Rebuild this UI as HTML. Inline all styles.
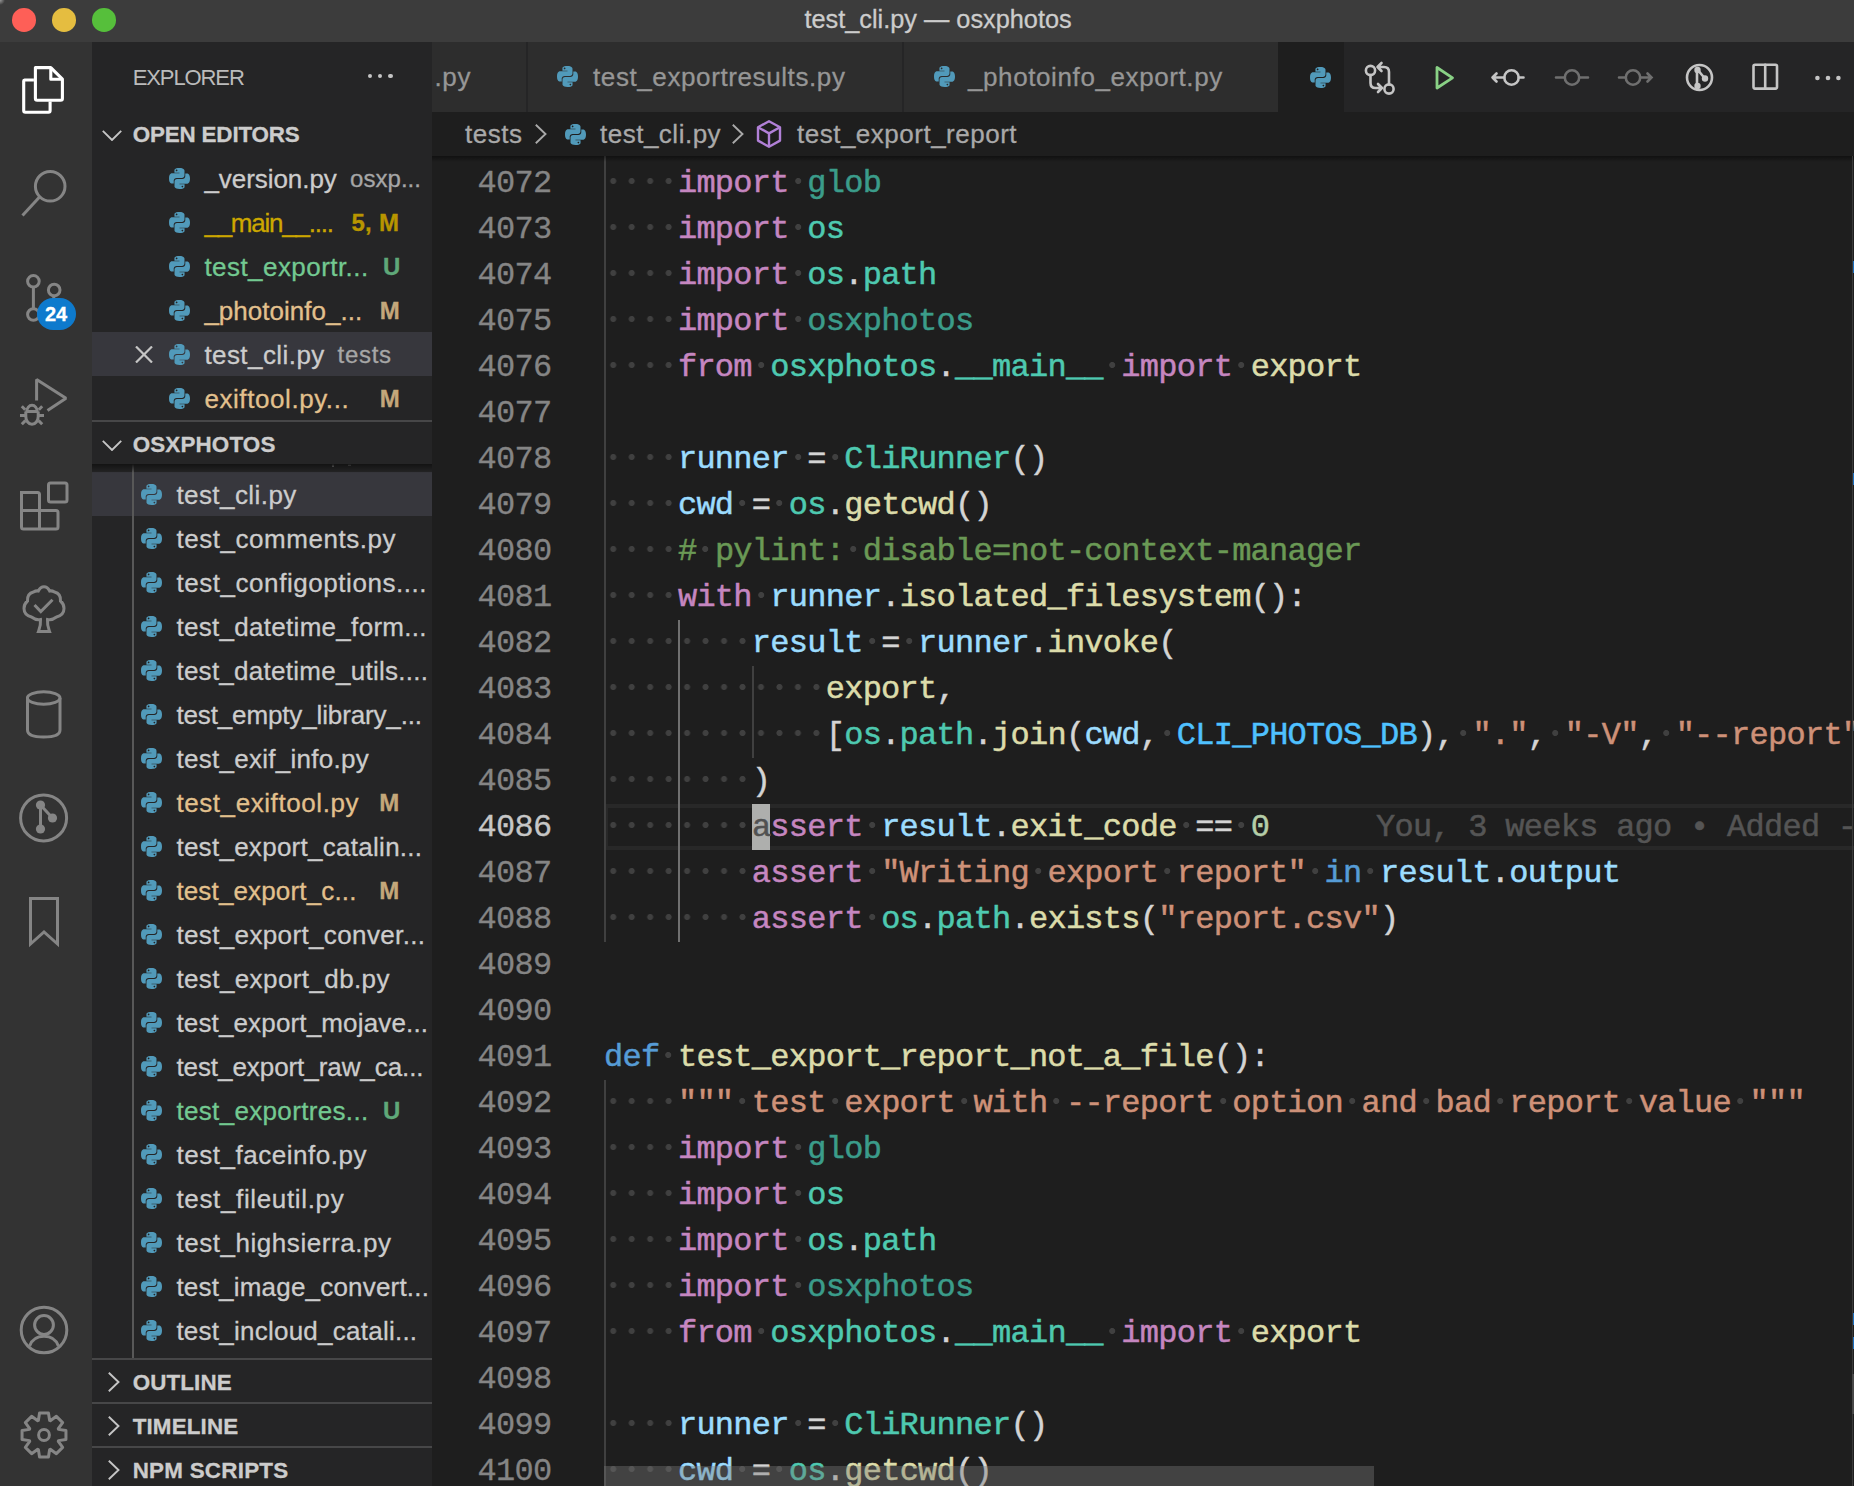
<!DOCTYPE html><html><head><meta charset="utf-8"><style>
*{margin:0;padding:0;box-sizing:border-box}
html,body{width:1854px;height:1486px;overflow:hidden;background:#1e1e1e}
body{position:relative;font-family:"Liberation Sans",sans-serif;-webkit-text-stroke:0.3px currentColor}
.t22{position:absolute;font-size:21.2px;line-height:28px;white-space:pre}
.hdr{position:absolute;font-size:22.4px;font-weight:bold;color:#cccccc;line-height:28px;white-space:pre}
.it{position:absolute;font-size:26px;line-height:44px;height:44px;white-space:pre;letter-spacing:0.35px}
.badge{font-size:24px;font-weight:bold;letter-spacing:0}
.tt{position:absolute;font-size:26px;line-height:70px;color:#969696;white-space:pre;letter-spacing:0.6px}
.dot{position:absolute;width:4.4px;height:4.4px;border-radius:50%;background:#c5c5c5}
.ln{position:absolute;left:380px;width:171.5px;height:46px;margin-top:1.3px;text-align:right;font-family:"Liberation Mono",monospace;font-size:32px;letter-spacing:-0.73px;line-height:46px;color:#858585;white-space:pre}
.ln.act{color:#c6c6c6}
.cl{position:absolute;left:604px;height:46px;margin-top:1.3px;-webkit-text-stroke:0.5px currentColor;font-family:"Liberation Mono",monospace;font-size:32px;letter-spacing:-0.73px;line-height:46px;white-space:pre;color:#d4d4d4}
.dt{position:absolute;height:8px;background:radial-gradient(circle at 9.235px 4px,#404040 2.6px,rgba(64,64,64,0) 3.4px) 0 0/18.47px 8px repeat-x}
.py{width:21px;height:21px}
</style></head><body>
<svg width="0" height="0" style="position:absolute"><defs><symbol id="pyi" viewBox="0 0 24 24"><path fill="#519aba" d="M11.9 0C5.8 0 6.2 2.6 6.2 2.6v2.7h5.8v.8H3.9S0 5.7 0 11.9c0 6.1 3.4 5.9 3.4 5.9h2v-2.9s-.1-3.4 3.3-3.4h5.8s3.2.1 3.2-3.1V3.2S18.2 0 11.9 0zM8.7 1.8c.6 0 1 .5 1 1s-.5 1-1 1c-.6 0-1-.5-1-1s.4-1 1-1zM12.1 24c6.1 0 5.7-2.6 5.7-2.6v-2.7H12v-.8h8.1s3.9.4 3.9-5.7c0-6.1-3.4-5.9-3.4-5.9h-2v2.9s.1 3.4-3.3 3.4H9.5s-3.2-.1-3.2 3.1v5.2S5.8 24 12.1 24zm3.2-1.8c-.6 0-1-.5-1-1s.5-1 1-1c.6 0 1 .5 1 1s-.4 1-1 1z"/></symbol></defs></svg>
<div style="position:absolute;left:0;top:0;width:1854px;height:42px;background:#3c3c3c"></div>
<div style="position:absolute;left:0;top:0;width:6px;height:6px;background:radial-gradient(circle at 0 0,#9a9a9a 0,rgba(60,60,60,0) 5px)"></div>
<i style="position:absolute;left:11.7px;top:7.7px;width:24.6px;height:24.6px;border-radius:50%;background:#333b3b"></i>
<i style="position:absolute;left:12.2px;top:8.2px;width:23.6px;height:23.6px;border-radius:50%;background:#fe5f57"></i>
<i style="position:absolute;left:51.7px;top:7.7px;width:24.6px;height:24.6px;border-radius:50%;background:#333b3b"></i>
<i style="position:absolute;left:52.2px;top:8.2px;width:23.6px;height:23.6px;border-radius:50%;background:#e5bd40"></i>
<i style="position:absolute;left:91.7px;top:7.7px;width:24.6px;height:24.6px;border-radius:50%;background:#333b3b"></i>
<i style="position:absolute;left:92.2px;top:8.2px;width:23.6px;height:23.6px;border-radius:50%;background:#56bf3b"></i>
<div style="position:absolute;left:804.5px;top:-2px;height:42px;line-height:42px;font-size:25.3px;color:#cccccc;white-space:pre">test_cli.py — osxphotos</div>
<div style="position:absolute;left:0;top:42px;width:92px;height:1444px;background:#333333"></div>
<svg style="position:absolute;left:0;top:42px;width:92px;height:1444px" viewBox="0 42 92 1444">
<g fill="none" stroke="#ffffff" stroke-width="3.1" stroke-linejoin="round">
<path d="M33.9 80H24.5Q23.7 80 23.7 81V110.6Q23.7 112.3 25.4 112.3H48.5Q50.1 112.3 50.1 110.6V101.6"/>
<path d="M35.4 67.6H50.8L62.4 79.2V98.6Q62.4 100.3 60.7 100.3H37.1Q35.4 100.3 35.4 98.6Z"/>
<path d="M50.8 67.6V79.2H62.4"/>
</g>
<g fill="none" stroke="#858585" stroke-width="3">
<circle cx="50.2" cy="186.3" r="14.8"/>
<path d="M40 196.5L22.5 215.5"/>
<circle cx="33.4" cy="281.3" r="5.8"/>
<circle cx="54.2" cy="290" r="5.8"/>
<circle cx="33.4" cy="314.5" r="5.8"/>
<path d="M33.4 287.1V308.7"/>
<path d="M54.2 295.8Q54.2 303 41 308"/>
<path d="M36.6 400.5V379.5L66 398.3L47.5 410.5" stroke-linejoin="bevel"/>
<path d="M25.5 411.5H38.5M26.8 411.5A5.2 6.2 0 0 1 37.2 411.5M25.8 411.5V416.5A6.2 7.8 0 0 0 38.2 416.5V411.5"/>
<path d="M20 415.5H25.8M38.2 415.5H44M21.8 406.3L25.2 409.7M42.2 406.3L38.8 409.7M21.8 424.2L25.4 420.6M42.2 424.2L38.6 420.6"/>
<path d="M21.5 492.5H37.5Q39.5 492.5 39.5 494.5V510.5H56Q58 510.5 58 512.5V527Q58 529 56 529H23.5Q21.5 529 21.5 527Z"/>
<path d="M21.5 510.5H39.5V529"/>
<rect x="48.5" y="483" width="18.5" height="19" rx="2"/>
<path d="M34.5 605L40.8 611.5L52.5 599.8"/>
<path d="M40.5 619.5Q36 620.5 31.5 617Q24 615 24 608.5Q24 604 27.5 601Q27 593.5 33.5 592Q36 590.5 38.3 591Q40.5 586.8 44 586.8Q47.5 586.8 49.7 591Q52 590.5 54.5 592Q61 593.5 60.5 601Q64 604 64 608.5Q64 615 56.5 617Q52 620.5 47.5 619.5Q47 625 49.5 631.5H38.5Q41 625 40.5 619.5Z"/>
<path d="M27.5 698V730Q27.5 737 43.7 737Q60 737 60 730V698"/>
<ellipse cx="43.7" cy="698" rx="16.3" ry="6.2"/>
<circle cx="43.6" cy="817.9" r="23"/>
<path d="M40.5 805V829M40.5 805L52.5 818"/>
<path d="M30.5 898.5H57.5V944L44 932L30.5 944Z"/>
<circle cx="44" cy="1330" r="22.8"/>
<circle cx="44" cy="1325" r="9.4"/>
<path d="M29.6 1346Q33 1336.2 44 1336.2Q55 1336.2 58.4 1346"/>
<circle cx="44" cy="1435" r="5.4"/>
</g>
<g fill="#858585">
<circle cx="40.5" cy="805" r="4.6"/><circle cx="52.5" cy="818" r="4.6"/><circle cx="40.5" cy="829" r="4.6"/>
</g>
<path fill="none" stroke="#858585" stroke-width="3" stroke-linejoin="round" d="M39.55 1413.05 L48.45 1413.05 L49.64 1420.46 L50.30 1420.73 L56.38 1416.33 L62.67 1422.62 L58.27 1428.70 L58.54 1429.36 L65.95 1430.55 L65.95 1439.45 L58.54 1440.64 L58.27 1441.30 L62.67 1447.38 L56.38 1453.67 L50.30 1449.27 L49.64 1449.54 L48.45 1456.95 L39.55 1456.95 L38.36 1449.54 L37.70 1449.27 L31.62 1453.67 L25.33 1447.38 L29.73 1441.30 L29.46 1440.64 L22.05 1439.45 L22.05 1430.55 L29.46 1429.36 L29.73 1428.70 L25.33 1422.62 L31.62 1416.33 L37.70 1420.73 L38.36 1420.46Z"/>
</svg>
<div style="position:absolute;left:36.5px;top:298px;width:39px;height:32px;border-radius:16px;background:#0e7acd;color:#fff;font:bold 20px 'Liberation Sans',sans-serif;text-align:center;line-height:32px">24</div>
<div style="position:absolute;left:92px;top:42px;width:340px;height:1444px;background:#252526"></div>
<div style="position:absolute;left:132.7px;top:64px;font-size:22px;font-weight:400;color:#bbbbbb;line-height:28px;height:28px;white-space:pre;letter-spacing:-1.104px;-webkit-text-stroke:0">EXPLORER</div>
<i class="dot" style="left:367.8px;top:73.8px"></i>
<i class="dot" style="left:378.1px;top:73.8px"></i>
<i class="dot" style="left:388.3px;top:73.8px"></i>
<svg style="position:absolute;left:102px;top:130px;width:20px;height:11px" viewBox="0 0 20 11"><path d="M0.8 0.8L10 10L19.2 0.8" stroke="#c5c5c5" stroke-width="1.9" fill="none"/></svg>
<div style="position:absolute;left:132.7px;top:121px;font-size:22.4px;font-weight:700;color:#cccccc;line-height:28px;height:28px;white-space:pre;letter-spacing:-0.154px;">OPEN EDITORS</div>
<svg style="position:absolute;left:169px;top:168px;width:21px;height:21px" viewBox="0 0 24 24"><use href="#pyi"/></svg>
<div style="position:absolute;left:204.4px;top:157px;font-size:26px;font-weight:400;color:#cccccc;line-height:44px;height:44px;white-space:pre;letter-spacing:-0.057px;">_version.py</div>
<div style="position:absolute;left:350.1px;top:157px;font-size:24px;font-weight:400;color:#a6a6a6;line-height:44px;height:44px;white-space:pre;letter-spacing:0.033px;">osxp...</div>
<svg style="position:absolute;left:169px;top:212px;width:21px;height:21px" viewBox="0 0 24 24"><use href="#pyi"/></svg>
<div style="position:absolute;left:204.4px;top:201px;font-size:26px;font-weight:400;color:#cca700;line-height:44px;height:44px;white-space:pre;letter-spacing:-1.218px;">__main__....</div>
<div style="position:absolute;left:351.5px;top:201px;font-size:24px;font-weight:700;color:#b89500;line-height:44px;height:44px;white-space:pre;letter-spacing:0.271px;">5, M</div>
<svg style="position:absolute;left:169px;top:256px;width:21px;height:21px" viewBox="0 0 24 24"><use href="#pyi"/></svg>
<div style="position:absolute;left:204.4px;top:245px;font-size:26px;font-weight:400;color:#73c991;line-height:44px;height:44px;white-space:pre;letter-spacing:0.448px;">test_exportr...</div>
<div style="position:absolute;left:383px;top:245px;font-size:24px;font-weight:700;color:#5fa879;line-height:44px;height:44px;white-space:pre;letter-spacing:0.000px;">U</div>
<svg style="position:absolute;left:169px;top:300px;width:21px;height:21px" viewBox="0 0 24 24"><use href="#pyi"/></svg>
<div style="position:absolute;left:204.4px;top:289px;font-size:26px;font-weight:400;color:#e2c08d;line-height:44px;height:44px;white-space:pre;letter-spacing:0.017px;">_photoinfo_...</div>
<div style="position:absolute;left:379.7px;top:289px;font-size:24px;font-weight:700;color:#c4a77a;line-height:44px;height:44px;white-space:pre;letter-spacing:0.000px;">M</div>
<div style="position:absolute;left:92px;top:332px;width:340px;height:44px;background:#37373d"></div>
<svg style="position:absolute;left:135px;top:345.5px;width:18px;height:17px" viewBox="0 0 18 17"><path d="M1 0.5L17 16.5M17 0.5L1 16.5" stroke="#c5c5c5" stroke-width="2.2" fill="none"/></svg>
<svg style="position:absolute;left:169px;top:344px;width:21px;height:21px" viewBox="0 0 24 24"><use href="#pyi"/></svg>
<div style="position:absolute;left:204.4px;top:333px;font-size:26px;font-weight:400;color:#cccccc;line-height:44px;height:44px;white-space:pre;letter-spacing:0.429px;">test_cli.py</div>
<div style="position:absolute;left:337.6px;top:333px;font-size:24px;font-weight:400;color:#a6a6a6;line-height:44px;height:44px;white-space:pre;letter-spacing:0.678px;">tests</div>
<svg style="position:absolute;left:169px;top:388px;width:21px;height:21px" viewBox="0 0 24 24"><use href="#pyi"/></svg>
<div style="position:absolute;left:204.4px;top:377px;font-size:26px;font-weight:400;color:#e2c08d;line-height:44px;height:44px;white-space:pre;letter-spacing:0.576px;">exiftool.py...</div>
<div style="position:absolute;left:379.7px;top:377px;font-size:24px;font-weight:700;color:#c4a77a;line-height:44px;height:44px;white-space:pre;letter-spacing:0.000px;">M</div>
<div style="position:absolute;left:92px;top:420px;width:340px;height:2px;background:#474748"></div>
<svg style="position:absolute;left:102px;top:440px;width:20px;height:11px" viewBox="0 0 20 11"><path d="M0.8 0.8L10 10L19.2 0.8" stroke="#c5c5c5" stroke-width="1.9" fill="none"/></svg>
<div style="position:absolute;left:132.7px;top:431px;font-size:22.4px;font-weight:700;color:#cccccc;line-height:28px;height:28px;white-space:pre;letter-spacing:0.158px;">OSXPHOTOS</div>
<div style="position:absolute;left:92px;top:464px;width:340px;height:894px;overflow:hidden">
<div style="position:absolute;left:-92px;top:-464px;width:432px;height:1358px">
<i style="position:absolute;left:331.5px;top:464px;width:2px;height:2.5px;background:#bbbbbb"></i><i style="position:absolute;left:347.5px;top:464px;width:3px;height:2px;background:#bbbbbb"></i>
<div style="position:absolute;left:92px;top:472px;width:340px;height:44px;background:#37373d"></div>
<svg style="position:absolute;left:141px;top:484px;width:21px;height:21px" viewBox="0 0 24 24"><use href="#pyi"/></svg>
<div style="position:absolute;left:176.4px;top:473px;font-size:26px;font-weight:400;color:#cccccc;line-height:44px;height:44px;white-space:pre;letter-spacing:0.429px;">test_cli.py</div>
<svg style="position:absolute;left:141px;top:528px;width:21px;height:21px" viewBox="0 0 24 24"><use href="#pyi"/></svg>
<div style="position:absolute;left:176.4px;top:517px;font-size:26px;font-weight:400;color:#cccccc;line-height:44px;height:44px;white-space:pre;letter-spacing:0.541px;">test_comments.py</div>
<svg style="position:absolute;left:141px;top:572px;width:21px;height:21px" viewBox="0 0 24 24"><use href="#pyi"/></svg>
<div style="position:absolute;left:176.4px;top:561px;font-size:26px;font-weight:400;color:#cccccc;line-height:44px;height:44px;white-space:pre;letter-spacing:0.558px;">test_configoptions....</div>
<svg style="position:absolute;left:141px;top:616px;width:21px;height:21px" viewBox="0 0 24 24"><use href="#pyi"/></svg>
<div style="position:absolute;left:176.4px;top:605px;font-size:26px;font-weight:400;color:#cccccc;line-height:44px;height:44px;white-space:pre;letter-spacing:0.298px;">test_datetime_form...</div>
<svg style="position:absolute;left:141px;top:660px;width:21px;height:21px" viewBox="0 0 24 24"><use href="#pyi"/></svg>
<div style="position:absolute;left:176.4px;top:649px;font-size:26px;font-weight:400;color:#cccccc;line-height:44px;height:44px;white-space:pre;letter-spacing:0.269px;">test_datetime_utils....</div>
<svg style="position:absolute;left:141px;top:704px;width:21px;height:21px" viewBox="0 0 24 24"><use href="#pyi"/></svg>
<div style="position:absolute;left:176.4px;top:693px;font-size:26px;font-weight:400;color:#cccccc;line-height:44px;height:44px;white-space:pre;letter-spacing:-0.136px;">test_empty_library_...</div>
<svg style="position:absolute;left:141px;top:748px;width:21px;height:21px" viewBox="0 0 24 24"><use href="#pyi"/></svg>
<div style="position:absolute;left:176.4px;top:737px;font-size:26px;font-weight:400;color:#cccccc;line-height:44px;height:44px;white-space:pre;letter-spacing:0.282px;">test_exif_info.py</div>
<svg style="position:absolute;left:141px;top:792px;width:21px;height:21px" viewBox="0 0 24 24"><use href="#pyi"/></svg>
<div style="position:absolute;left:176.4px;top:781px;font-size:26px;font-weight:400;color:#e2c08d;line-height:44px;height:44px;white-space:pre;letter-spacing:0.577px;">test_exiftool.py</div>
<div style="position:absolute;left:379.2px;top:781px;font-size:24px;font-weight:700;color:#c4a77a;line-height:44px;height:44px;white-space:pre;letter-spacing:0.000px;">M</div>
<svg style="position:absolute;left:141px;top:836px;width:21px;height:21px" viewBox="0 0 24 24"><use href="#pyi"/></svg>
<div style="position:absolute;left:176.4px;top:825px;font-size:26px;font-weight:400;color:#cccccc;line-height:44px;height:44px;white-space:pre;letter-spacing:0.275px;">test_export_catalin...</div>
<svg style="position:absolute;left:141px;top:880px;width:21px;height:21px" viewBox="0 0 24 24"><use href="#pyi"/></svg>
<div style="position:absolute;left:176.4px;top:869px;font-size:26px;font-weight:400;color:#e2c08d;line-height:44px;height:44px;white-space:pre;letter-spacing:0.149px;">test_export_c...</div>
<div style="position:absolute;left:379.2px;top:869px;font-size:24px;font-weight:700;color:#c4a77a;line-height:44px;height:44px;white-space:pre;letter-spacing:0.000px;">M</div>
<svg style="position:absolute;left:141px;top:924px;width:21px;height:21px" viewBox="0 0 24 24"><use href="#pyi"/></svg>
<div style="position:absolute;left:176.4px;top:913px;font-size:26px;font-weight:400;color:#cccccc;line-height:44px;height:44px;white-space:pre;letter-spacing:0.366px;">test_export_conver...</div>
<svg style="position:absolute;left:141px;top:968px;width:21px;height:21px" viewBox="0 0 24 24"><use href="#pyi"/></svg>
<div style="position:absolute;left:176.4px;top:957px;font-size:26px;font-weight:400;color:#cccccc;line-height:44px;height:44px;white-space:pre;letter-spacing:0.400px;">test_export_db.py</div>
<svg style="position:absolute;left:141px;top:1012px;width:21px;height:21px" viewBox="0 0 24 24"><use href="#pyi"/></svg>
<div style="position:absolute;left:176.4px;top:1001px;font-size:26px;font-weight:400;color:#cccccc;line-height:44px;height:44px;white-space:pre;letter-spacing:0.151px;">test_export_mojave...</div>
<svg style="position:absolute;left:141px;top:1056px;width:21px;height:21px" viewBox="0 0 24 24"><use href="#pyi"/></svg>
<div style="position:absolute;left:176.4px;top:1045px;font-size:26px;font-weight:400;color:#cccccc;line-height:44px;height:44px;white-space:pre;letter-spacing:-0.069px;">test_export_raw_ca...</div>
<svg style="position:absolute;left:141px;top:1100px;width:21px;height:21px" viewBox="0 0 24 24"><use href="#pyi"/></svg>
<div style="position:absolute;left:176.4px;top:1089px;font-size:26px;font-weight:400;color:#73c991;line-height:44px;height:44px;white-space:pre;letter-spacing:0.336px;">test_exportres...</div>
<div style="position:absolute;left:383px;top:1089px;font-size:24px;font-weight:700;color:#5fa879;line-height:44px;height:44px;white-space:pre;letter-spacing:0.000px;">U</div>
<svg style="position:absolute;left:141px;top:1144px;width:21px;height:21px" viewBox="0 0 24 24"><use href="#pyi"/></svg>
<div style="position:absolute;left:176.4px;top:1133px;font-size:26px;font-weight:400;color:#cccccc;line-height:44px;height:44px;white-space:pre;letter-spacing:0.532px;">test_faceinfo.py</div>
<svg style="position:absolute;left:141px;top:1188px;width:21px;height:21px" viewBox="0 0 24 24"><use href="#pyi"/></svg>
<div style="position:absolute;left:176.4px;top:1177px;font-size:26px;font-weight:400;color:#cccccc;line-height:44px;height:44px;white-space:pre;letter-spacing:0.651px;">test_fileutil.py</div>
<svg style="position:absolute;left:141px;top:1232px;width:21px;height:21px" viewBox="0 0 24 24"><use href="#pyi"/></svg>
<div style="position:absolute;left:176.4px;top:1221px;font-size:26px;font-weight:400;color:#cccccc;line-height:44px;height:44px;white-space:pre;letter-spacing:0.551px;">test_highsierra.py</div>
<svg style="position:absolute;left:141px;top:1276px;width:21px;height:21px" viewBox="0 0 24 24"><use href="#pyi"/></svg>
<div style="position:absolute;left:176.4px;top:1265px;font-size:26px;font-weight:400;color:#cccccc;line-height:44px;height:44px;white-space:pre;letter-spacing:0.196px;">test_image_convert...</div>
<svg style="position:absolute;left:141px;top:1320px;width:21px;height:21px" viewBox="0 0 24 24"><use href="#pyi"/></svg>
<div style="position:absolute;left:176.4px;top:1309px;font-size:26px;font-weight:400;color:#cccccc;line-height:44px;height:44px;white-space:pre;letter-spacing:0.243px;">test_incloud_catali...</div>
<div style="position:absolute;left:132px;top:464px;width:2px;height:894px;background:#585858"></div>
<div style="position:absolute;left:92px;top:464px;width:340px;height:9px;background:linear-gradient(#131313,rgba(19,19,19,0))"></div>
</div></div>
<div style="position:absolute;left:92px;top:1358px;width:340px;height:2px;background:#474748"></div>
<svg style="position:absolute;left:107.6px;top:1372.4px;width:12px;height:20px" viewBox="0 0 12 20"><path d="M0.8 0.8L10.5 10L0.8 19.2" stroke="#c5c5c5" stroke-width="1.9" fill="none"/></svg>
<div style="position:absolute;left:132.7px;top:1369px;font-size:22.4px;font-weight:700;color:#cccccc;line-height:28px;height:28px;white-space:pre;letter-spacing:0.122px;">OUTLINE</div>
<div style="position:absolute;left:92px;top:1402px;width:340px;height:2px;background:#474748"></div>
<svg style="position:absolute;left:107.6px;top:1416.4px;width:12px;height:20px" viewBox="0 0 12 20"><path d="M0.8 0.8L10.5 10L0.8 19.2" stroke="#c5c5c5" stroke-width="1.9" fill="none"/></svg>
<div style="position:absolute;left:132.7px;top:1413px;font-size:22.4px;font-weight:700;color:#cccccc;line-height:28px;height:28px;white-space:pre;letter-spacing:0.143px;">TIMELINE</div>
<div style="position:absolute;left:92px;top:1446px;width:340px;height:2px;background:#474748"></div>
<svg style="position:absolute;left:107.6px;top:1460.4px;width:12px;height:20px" viewBox="0 0 12 20"><path d="M0.8 0.8L10.5 10L0.8 19.2" stroke="#c5c5c5" stroke-width="1.9" fill="none"/></svg>
<div style="position:absolute;left:132.7px;top:1457px;font-size:22.4px;font-weight:700;color:#cccccc;line-height:28px;height:28px;white-space:pre;letter-spacing:0.247px;">NPM SCRIPTS</div>
<div style="position:absolute;left:432px;top:42px;width:1422px;height:70px;background:#252526"></div>
<div style="position:absolute;left:432px;top:42px;width:94px;height:70px;background:#2d2d2d;overflow:hidden"><div class="tt" style="left:2.5px;top:0">.py</div></div>
<div style="position:absolute;left:528px;top:42px;width:374px;height:70px;background:#2d2d2d"></div>
<svg style="position:absolute;left:557px;top:66px;width:21px;height:21px" viewBox="0 0 24 24"><use href="#pyi"/></svg>
<div class="tt" style="left:593px;top:42px">test_exportresults.py</div>
<div style="position:absolute;left:904px;top:42px;width:374px;height:70px;background:#2d2d2d"></div>
<svg style="position:absolute;left:933.5px;top:66px;width:21px;height:21px" viewBox="0 0 24 24"><use href="#pyi"/></svg>
<div class="tt" style="left:968px;top:42px">_photoinfo_export.py</div>
<div style="position:absolute;left:1278px;top:42px;width:66px;height:70px;background:#1e1e1e"></div>
<svg style="position:absolute;left:1309.5px;top:66.5px;width:21px;height:21px" viewBox="0 0 24 24"><use href="#pyi"/></svg>
<svg style="position:absolute;left:1344px;top:42px;width:510px;height:70px" viewBox="1344 42 510 70">
<g fill="none" stroke="#c5c5c5" stroke-width="2.6" stroke-linecap="round" stroke-linejoin="round">
<circle cx="1370.5" cy="70.5" r="4.6"/><circle cx="1389" cy="89" r="4.6"/>
<path d="M1370.5 75V83Q1370.5 88 1375.5 88H1382M1378 84L1382 88L1378 92"/>
<path d="M1389 84.5V72Q1389 67 1384 67H1377.5M1381.5 63L1377.5 67L1381.5 71"/>
<circle cx="1511.5" cy="77.5" r="7.2"/><path d="M1518.7 77.5H1523.5M1504.3 77.5H1492.5M1496.5 73.5L1492.5 77.5L1496.5 81.5"/>
<circle cx="1699.5" cy="77.5" r="12.5"/>
<path d="M1697 69V86M1697 69L1704.5 78"/>
<rect x="1753.5" y="64.8" width="23.5" height="23.8" rx="1.5"/>
<path d="M1765.2 64.8V88.6"/>
</g>
<path d="M1437 67.5V88L1452.5 77.8Z" fill="none" stroke="#89d185" stroke-width="2.8" stroke-linejoin="round"/>
<g fill="none" stroke="#6f6f6f" stroke-width="2.6" stroke-linecap="round">
<circle cx="1572" cy="77.5" r="7.2"/><path d="M1564.8 77.5H1556M1579.2 77.5H1588"/>
<circle cx="1633" cy="77.5" r="7.2"/><path d="M1625.8 77.5H1619M1640.2 77.5H1651.5M1647.5 73.5L1651.5 77.5L1647.5 81.5"/>
</g>
<g fill="#c5c5c5"><circle cx="1697.5" cy="70" r="3.2"/><circle cx="1705" cy="78.5" r="3.2"/><circle cx="1697.5" cy="86" r="3.2"/></g>
<g fill="#c5c5c5"><circle cx="1817.4" cy="78" r="2.3"/><circle cx="1828" cy="78" r="2.3"/><circle cx="1838.4" cy="78" r="2.3"/></g>
</svg>
<div style="position:absolute;left:432px;top:112px;width:1422px;height:44px;background:#1e1e1e"></div>
<div class="tt" style="left:465px;top:112px;line-height:44px;color:#a9a9a9;letter-spacing:0.5px">tests</div>
<svg style="position:absolute;left:534.5px;top:123.6px;width:12px;height:20px" viewBox="0 0 12 20"><path d="M0.8 0.8L10.5 10L0.8 19.2" stroke="#a9a9a9" stroke-width="1.9" fill="none"/></svg>
<svg style="position:absolute;left:565px;top:124px;width:21px;height:21px" viewBox="0 0 24 24"><use href="#pyi"/></svg>
<div class="tt" style="left:600px;top:112px;line-height:44px;color:#a9a9a9;letter-spacing:0.5px">test_cli.py</div>
<svg style="position:absolute;left:732.3px;top:123.6px;width:12px;height:20px" viewBox="0 0 12 20"><path d="M0.8 0.8L10.5 10L0.8 19.2" stroke="#a9a9a9" stroke-width="1.9" fill="none"/></svg>
<svg style="position:absolute;left:755px;top:118px;width:28px;height:32px" viewBox="0 0 28 32"><g fill="none" stroke="#b180d7" stroke-width="2.4" stroke-linejoin="round"><path d="M14 3.2L25 9.2V22.6L14 28.8L3 22.6V9.2Z"/><path d="M3 9.2L14 15.4L25 9.2M14 15.4V28.8"/></g></svg>
<div class="tt" style="left:797px;top:112px;line-height:44px;color:#a9a9a9;letter-spacing:0.5px">test_export_report</div>
<div style="position:absolute;left:432px;top:156px;width:1422px;height:1330px;overflow:hidden">
<div style="position:absolute;left:-432px;top:-156px;width:1854px;height:1486px">
<div style="position:absolute;left:604px;top:804px;width:1300px;height:46px;border:4px solid #282828"></div>
<div style="position:absolute;left:604px;top:156px;width:2px;height:786px;background:#404040"></div>
<div style="position:absolute;left:678px;top:620px;width:2px;height:322px;background:#707070"></div>
<div style="position:absolute;left:752px;top:666px;width:2px;height:92px;background:#404040"></div>
<div style="position:absolute;left:604px;top:1080px;width:2px;height:410px;background:#404040"></div>
<div class="ln" style="top:160px">4072</div>
<i class="dt" style="top:177px;left:604.00px;width:73.88px"></i>
<i class="dt" style="top:177px;left:788.70px;width:18.47px"></i>
<div class="cl" style="top:160px">    <span style="color:#c586c0">import</span> <span style="color:#3b9c8a">glob</span></div>
<div class="ln" style="top:206px">4073</div>
<i class="dt" style="top:223px;left:604.00px;width:73.88px"></i>
<i class="dt" style="top:223px;left:788.70px;width:18.47px"></i>
<div class="cl" style="top:206px">    <span style="color:#c586c0">import</span> <span style="color:#4ec9b0">os</span></div>
<div class="ln" style="top:252px">4074</div>
<i class="dt" style="top:269px;left:604.00px;width:73.88px"></i>
<i class="dt" style="top:269px;left:788.70px;width:18.47px"></i>
<div class="cl" style="top:252px">    <span style="color:#c586c0">import</span> <span style="color:#4ec9b0">os</span><span style="color:#d4d4d4">.</span><span style="color:#4ec9b0">path</span></div>
<div class="ln" style="top:298px">4075</div>
<i class="dt" style="top:315px;left:604.00px;width:73.88px"></i>
<i class="dt" style="top:315px;left:788.70px;width:18.47px"></i>
<div class="cl" style="top:298px">    <span style="color:#c586c0">import</span> <span style="color:#3b9c8a">osxphotos</span></div>
<div class="ln" style="top:344px">4076</div>
<i class="dt" style="top:361px;left:604.00px;width:73.88px"></i>
<i class="dt" style="top:361px;left:751.76px;width:18.47px"></i>
<i class="dt" style="top:361px;left:1102.69px;width:18.47px"></i>
<i class="dt" style="top:361px;left:1231.98px;width:18.47px"></i>
<div class="cl" style="top:344px">    <span style="color:#c586c0">from</span> <span style="color:#4ec9b0">osxphotos</span><span style="color:#d4d4d4">.</span><span style="color:#4ec9b0">__main__</span> <span style="color:#c586c0">import</span> <span style="color:#dcdcaa">export</span></div>
<div class="ln" style="top:390px">4077</div>
<div class="cl" style="top:390px"></div>
<div class="ln" style="top:436px">4078</div>
<i class="dt" style="top:453px;left:604.00px;width:73.88px"></i>
<i class="dt" style="top:453px;left:788.70px;width:18.47px"></i>
<i class="dt" style="top:453px;left:825.64px;width:18.47px"></i>
<div class="cl" style="top:436px">    <span style="color:#9cdcfe">runner</span> <span style="color:#d4d4d4">=</span> <span style="color:#4ec9b0">CliRunner</span><span style="color:#d4d4d4">()</span></div>
<div class="ln" style="top:482px">4079</div>
<i class="dt" style="top:499px;left:604.00px;width:73.88px"></i>
<i class="dt" style="top:499px;left:733.29px;width:18.47px"></i>
<i class="dt" style="top:499px;left:770.23px;width:18.47px"></i>
<div class="cl" style="top:482px">    <span style="color:#9cdcfe">cwd</span> <span style="color:#d4d4d4">=</span> <span style="color:#4ec9b0">os</span><span style="color:#d4d4d4">.</span><span style="color:#dcdcaa">getcwd</span><span style="color:#d4d4d4">()</span></div>
<div class="ln" style="top:528px">4080</div>
<i class="dt" style="top:545px;left:604.00px;width:73.88px"></i>
<i class="dt" style="top:545px;left:696.35px;width:18.47px"></i>
<i class="dt" style="top:545px;left:844.11px;width:18.47px"></i>
<div class="cl" style="top:528px">    <span style="color:#6a9955">#</span> <span style="color:#6a9955">pylint:</span> <span style="color:#6a9955">disable=not-context-manager</span></div>
<div class="ln" style="top:574px">4081</div>
<i class="dt" style="top:591px;left:604.00px;width:73.88px"></i>
<i class="dt" style="top:591px;left:751.76px;width:18.47px"></i>
<div class="cl" style="top:574px">    <span style="color:#c586c0">with</span> <span style="color:#9cdcfe">runner</span><span style="color:#d4d4d4">.</span><span style="color:#dcdcaa">isolated_filesystem</span><span style="color:#d4d4d4">():</span></div>
<div class="ln" style="top:620px">4082</div>
<i class="dt" style="top:637px;left:604.00px;width:147.76px"></i>
<i class="dt" style="top:637px;left:862.58px;width:18.47px"></i>
<i class="dt" style="top:637px;left:899.52px;width:18.47px"></i>
<div class="cl" style="top:620px">        <span style="color:#9cdcfe">result</span> <span style="color:#d4d4d4">=</span> <span style="color:#9cdcfe">runner</span><span style="color:#d4d4d4">.</span><span style="color:#dcdcaa">invoke</span><span style="color:#d4d4d4">(</span></div>
<div class="ln" style="top:666px">4083</div>
<i class="dt" style="top:683px;left:604.00px;width:221.64px"></i>
<div class="cl" style="top:666px">            <span style="color:#dcdcaa">export</span><span style="color:#d4d4d4">,</span></div>
<div class="ln" style="top:712px">4084</div>
<i class="dt" style="top:729px;left:604.00px;width:221.64px"></i>
<i class="dt" style="top:729px;left:1158.10px;width:18.47px"></i>
<i class="dt" style="top:729px;left:1453.62px;width:18.47px"></i>
<i class="dt" style="top:729px;left:1545.97px;width:18.47px"></i>
<i class="dt" style="top:729px;left:1656.79px;width:18.47px"></i>
<div class="cl" style="top:712px">            <span style="color:#d4d4d4">[</span><span style="color:#4ec9b0">os</span><span style="color:#d4d4d4">.</span><span style="color:#4ec9b0">path</span><span style="color:#d4d4d4">.</span><span style="color:#dcdcaa">join</span><span style="color:#d4d4d4">(</span><span style="color:#9cdcfe">cwd</span><span style="color:#d4d4d4">,</span> <span style="color:#4fc1ff">CLI_PHOTOS_DB</span><span style="color:#d4d4d4">),</span> <span style="color:#ce9178">&quot;.&quot;</span><span style="color:#d4d4d4">,</span> <span style="color:#ce9178">&quot;-V&quot;</span><span style="color:#d4d4d4">,</span> <span style="color:#ce9178">&quot;--report&quot;</span><span style="color:#d4d4d4">,</span></div>
<div class="ln" style="top:758px">4085</div>
<i class="dt" style="top:775px;left:604.00px;width:147.76px"></i>
<div class="cl" style="top:758px">        <span style="color:#d4d4d4">)</span></div>
<div class="ln act" style="top:804px">4086</div>
<i class="dt" style="top:821px;left:604.00px;width:147.76px"></i>
<i class="dt" style="top:821px;left:862.58px;width:18.47px"></i>
<i class="dt" style="top:821px;left:1176.57px;width:18.47px"></i>
<i class="dt" style="top:821px;left:1231.98px;width:18.47px"></i>
<div class="cl" style="top:804px">        <span style="color:#c586c0">assert</span> <span style="color:#9cdcfe">result</span><span style="color:#d4d4d4">.</span><span style="color:#dcdcaa">exit_code</span> <span style="color:#d4d4d4">==</span> <span style="color:#b5cea8">0</span></div>
<div class="ln" style="top:850px">4087</div>
<i class="dt" style="top:867px;left:604.00px;width:147.76px"></i>
<i class="dt" style="top:867px;left:862.58px;width:18.47px"></i>
<i class="dt" style="top:867px;left:1028.81px;width:18.47px"></i>
<i class="dt" style="top:867px;left:1158.10px;width:18.47px"></i>
<i class="dt" style="top:867px;left:1305.86px;width:18.47px"></i>
<i class="dt" style="top:867px;left:1361.27px;width:18.47px"></i>
<div class="cl" style="top:850px">        <span style="color:#c586c0">assert</span> <span style="color:#ce9178">&quot;Writing</span> <span style="color:#ce9178">export</span> <span style="color:#ce9178">report&quot;</span> <span style="color:#569cd6">in</span> <span style="color:#9cdcfe">result</span><span style="color:#d4d4d4">.</span><span style="color:#9cdcfe">output</span></div>
<div class="ln" style="top:896px">4088</div>
<i class="dt" style="top:913px;left:604.00px;width:147.76px"></i>
<i class="dt" style="top:913px;left:862.58px;width:18.47px"></i>
<div class="cl" style="top:896px">        <span style="color:#c586c0">assert</span> <span style="color:#4ec9b0">os</span><span style="color:#d4d4d4">.</span><span style="color:#4ec9b0">path</span><span style="color:#d4d4d4">.</span><span style="color:#dcdcaa">exists</span><span style="color:#d4d4d4">(</span><span style="color:#ce9178">&quot;report.csv&quot;</span><span style="color:#d4d4d4">)</span></div>
<div class="ln" style="top:942px">4089</div>
<div class="cl" style="top:942px"></div>
<div class="ln" style="top:988px">4090</div>
<div class="cl" style="top:988px"></div>
<div class="ln" style="top:1034px">4091</div>
<i class="dt" style="top:1051px;left:659.41px;width:18.47px"></i>
<div class="cl" style="top:1034px"><span style="color:#569cd6">def</span> <span style="color:#dcdcaa">test_export_report_not_a_file</span><span style="color:#d4d4d4">():</span></div>
<div class="ln" style="top:1080px">4092</div>
<i class="dt" style="top:1097px;left:604.00px;width:73.88px"></i>
<i class="dt" style="top:1097px;left:733.29px;width:18.47px"></i>
<i class="dt" style="top:1097px;left:825.64px;width:18.47px"></i>
<i class="dt" style="top:1097px;left:954.93px;width:18.47px"></i>
<i class="dt" style="top:1097px;left:1047.28px;width:18.47px"></i>
<i class="dt" style="top:1097px;left:1213.51px;width:18.47px"></i>
<i class="dt" style="top:1097px;left:1342.80px;width:18.47px"></i>
<i class="dt" style="top:1097px;left:1416.68px;width:18.47px"></i>
<i class="dt" style="top:1097px;left:1490.56px;width:18.47px"></i>
<i class="dt" style="top:1097px;left:1619.85px;width:18.47px"></i>
<i class="dt" style="top:1097px;left:1730.67px;width:18.47px"></i>
<div class="cl" style="top:1080px">    <span style="color:#ce9178">&quot;&quot;&quot;</span> <span style="color:#ce9178">test</span> <span style="color:#ce9178">export</span> <span style="color:#ce9178">with</span> <span style="color:#ce9178">--report</span> <span style="color:#ce9178">option</span> <span style="color:#ce9178">and</span> <span style="color:#ce9178">bad</span> <span style="color:#ce9178">report</span> <span style="color:#ce9178">value</span> <span style="color:#ce9178">&quot;&quot;&quot;</span></div>
<div class="ln" style="top:1126px">4093</div>
<i class="dt" style="top:1143px;left:604.00px;width:73.88px"></i>
<i class="dt" style="top:1143px;left:788.70px;width:18.47px"></i>
<div class="cl" style="top:1126px">    <span style="color:#c586c0">import</span> <span style="color:#3b9c8a">glob</span></div>
<div class="ln" style="top:1172px">4094</div>
<i class="dt" style="top:1189px;left:604.00px;width:73.88px"></i>
<i class="dt" style="top:1189px;left:788.70px;width:18.47px"></i>
<div class="cl" style="top:1172px">    <span style="color:#c586c0">import</span> <span style="color:#4ec9b0">os</span></div>
<div class="ln" style="top:1218px">4095</div>
<i class="dt" style="top:1235px;left:604.00px;width:73.88px"></i>
<i class="dt" style="top:1235px;left:788.70px;width:18.47px"></i>
<div class="cl" style="top:1218px">    <span style="color:#c586c0">import</span> <span style="color:#4ec9b0">os</span><span style="color:#d4d4d4">.</span><span style="color:#4ec9b0">path</span></div>
<div class="ln" style="top:1264px">4096</div>
<i class="dt" style="top:1281px;left:604.00px;width:73.88px"></i>
<i class="dt" style="top:1281px;left:788.70px;width:18.47px"></i>
<div class="cl" style="top:1264px">    <span style="color:#c586c0">import</span> <span style="color:#3b9c8a">osxphotos</span></div>
<div class="ln" style="top:1310px">4097</div>
<i class="dt" style="top:1327px;left:604.00px;width:73.88px"></i>
<i class="dt" style="top:1327px;left:751.76px;width:18.47px"></i>
<i class="dt" style="top:1327px;left:1102.69px;width:18.47px"></i>
<i class="dt" style="top:1327px;left:1231.98px;width:18.47px"></i>
<div class="cl" style="top:1310px">    <span style="color:#c586c0">from</span> <span style="color:#4ec9b0">osxphotos</span><span style="color:#d4d4d4">.</span><span style="color:#4ec9b0">__main__</span> <span style="color:#c586c0">import</span> <span style="color:#dcdcaa">export</span></div>
<div class="ln" style="top:1356px">4098</div>
<div class="cl" style="top:1356px"></div>
<div class="ln" style="top:1402px">4099</div>
<i class="dt" style="top:1419px;left:604.00px;width:73.88px"></i>
<i class="dt" style="top:1419px;left:788.70px;width:18.47px"></i>
<i class="dt" style="top:1419px;left:825.64px;width:18.47px"></i>
<div class="cl" style="top:1402px">    <span style="color:#9cdcfe">runner</span> <span style="color:#d4d4d4">=</span> <span style="color:#4ec9b0">CliRunner</span><span style="color:#d4d4d4">()</span></div>
<div class="ln" style="top:1448px">4100</div>
<i class="dt" style="top:1465px;left:604.00px;width:73.88px"></i>
<i class="dt" style="top:1465px;left:733.29px;width:18.47px"></i>
<i class="dt" style="top:1465px;left:770.23px;width:18.47px"></i>
<div class="cl" style="top:1448px">    <span style="color:#9cdcfe">cwd</span> <span style="color:#d4d4d4">=</span> <span style="color:#4ec9b0">os</span><span style="color:#d4d4d4">.</span><span style="color:#dcdcaa">getcwd</span><span style="color:#d4d4d4">()</span></div>
<div style="position:absolute;left:752px;top:804px;width:18.3px;height:46px;background:#aeafad"></div>
<div class="cl" style="left:752px;top:804px;color:#515151">a</div>
<div class="cl" style="left:1376px;top:804px;color:#555555">You, 3 weeks ago • Added --report</div>
<div style="position:absolute;left:432px;top:156px;width:1422px;height:6px;background:linear-gradient(rgba(0,0,0,0.45),rgba(0,0,0,0))"></div>
<div style="position:absolute;left:604px;top:1466px;width:770px;height:20px;background:rgba(121,121,121,0.4)"></div>
<div style="position:absolute;left:1852px;top:156px;width:1px;height:1330px;background:#3a3a3a"></div>
<div style="position:absolute;left:1853px;top:261px;width:1px;height:12px;background:#1b6fc0"></div>
<div style="position:absolute;left:1853px;top:473px;width:1px;height:12px;background:#1b6fc0"></div>
<div style="position:absolute;left:1853px;top:1313px;width:1px;height:12px;background:#1b6fc0"></div>
<div style="position:absolute;left:1853px;top:1336.5px;width:1px;height:12.0px;background:#1b6fc0"></div>
<div style="position:absolute;left:1851.5px;top:1374px;width:2.5px;height:39.5px;background:#474747"></div>
</div></div>
</body></html>
